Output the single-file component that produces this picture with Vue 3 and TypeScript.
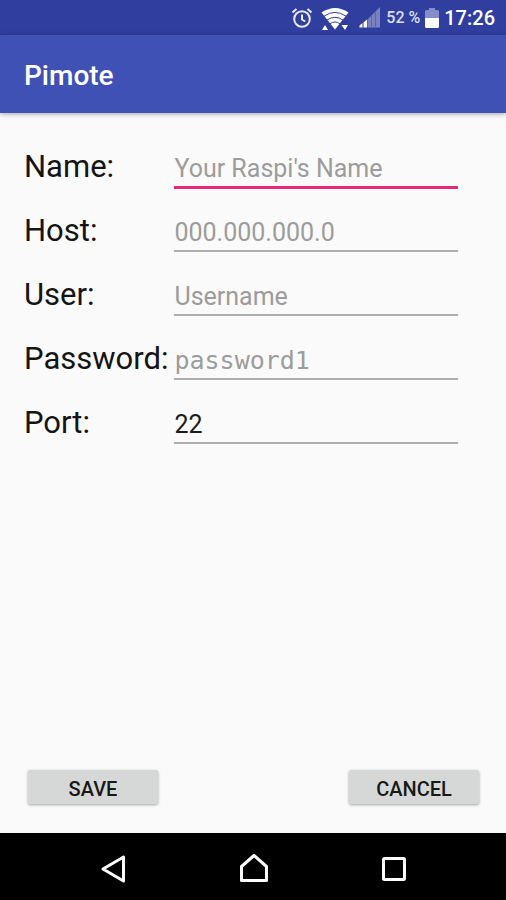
<script setup lang="ts">
import { ref } from 'vue'

interface Field {
  id: string
  label: string
  placeholder: string
  value: string
  mono?: boolean
}

const fields = ref<Field[]>([
  { id: 'name', label: 'Name:', placeholder: "Your Raspi's Name", value: '' },
  { id: 'host', label: 'Host:', placeholder: '000.000.000.0', value: '' },
  { id: 'user', label: 'User:', placeholder: 'Username', value: '' },
  { id: 'password', label: 'Password:', placeholder: 'password1', value: '', mono: true },
  { id: 'port', label: 'Port:', placeholder: '', value: '22' },
])

const active = ref('name')
</script>

<template>
  <div class="screen">
    <div class="status">
      <svg class="alarm" width="22" height="22" viewBox="0 0 22 22" aria-hidden="true">
        <circle cx="11" cy="12" r="7.8" fill="none" stroke="#e8eaf8" stroke-width="2" />
        <path d="M11 7.5v5l3.2 2M1.5 5.5l4-3.6M20.5 5.5l-4-3.6" fill="none" stroke="#e8eaf8" stroke-width="2" />
      </svg>
      <svg class="wifi" width="28" height="24" viewBox="0 0 28 24" aria-hidden="true">
        <path d="M0.5 5.5Q14-3.5 27.5 5.5L14 22.5z" fill="#fff" />
        <path d="M3 9.2Q14 1.6 25 9.2M6 13Q14 7.6 22 13M9 16.8Q14 13.2 19 16.8" fill="none" stroke="#303f9f" stroke-width="1" />
        <path d="M1 23l3-5 3 5zM20.5 18h6.5l-3 5z" fill="#fff" />
      </svg>
      <svg class="signal" width="22" height="21" viewBox="0 0 22 21" aria-hidden="true">
        <path d="M21 0v20.5H8.5V12.5z" fill="#7882c1" />
        <path d="M12.5 8.5v12M16.5 4.5v16" stroke="#5965b2" stroke-width="1" />
        <path d="M0.5 20.5v-2l3-2.5v4.5zM4.5 20.5v-5l3.5-3v8z" fill="#fff" />
      </svg>
      <span class="percent">52 %</span>
      <svg class="battery" width="14" height="20" viewBox="0 0 14 20" aria-hidden="true">
        <path d="M4 0h6v2h2.5q1.5 0 1.5 1.5V10H0V3.5Q0 2 1.5 2H4z" fill="#858ec8" />
        <path d="M0 10h14v8.5q0 1.5-1.5 1.5h-11Q0 20 0 18.5z" fill="#fff" />
      </svg>
      <span class="clock">17:26</span>
    </div>

    <header class="appbar">
      <h1>Pimote</h1>
    </header>

    <form class="content" @submit.prevent>
      <div class="fields">
        <template v-for="field in fields" :key="field.id">
          <label :for="field.id">{{ field.label }}</label>
          <input
            :id="field.id"
            v-model="field.value"
            type="text"
            autocomplete="off"
            :placeholder="field.placeholder"
            :class="{ active: active === field.id, mono: field.mono }"
            @focus="active = field.id"
          />
        </template>
      </div>
      <div class="actions">
        <button type="submit">SAVE</button>
        <button type="button">CANCEL</button>
      </div>
    </form>

    <nav class="navbar">
      <button type="button" aria-label="Back">
        <svg width="28" height="32" viewBox="0 0 28 32" aria-hidden="true">
          <path d="M23.5 4v24L3 16z" />
        </svg>
      </button>
      <button type="button" aria-label="Home">
        <svg width="28" height="32" viewBox="0 0 28 32" aria-hidden="true">
          <path d="M1.5 27.5V13.5L14 2.5l12.5 11v14z" />
        </svg>
      </button>
      <button type="button" aria-label="Recent apps">
        <svg width="28" height="32" viewBox="0 0 28 32" aria-hidden="true">
          <rect x="3.5" y="5.5" width="21" height="21" rx="1" />
        </svg>
      </button>
    </nav>
  </div>
</template>

<style>
body {
  margin: 0;
}
</style>

<style scoped>
.screen {
  display: flex;
  flex-direction: column;
  min-height: 100vh;
  background: #fafafa;
  font-family: Roboto, "Liberation Sans", sans-serif;
  color: #141414;
}

.status {
  display: flex;
  align-items: center;
  justify-content: flex-end;
  height: 35px;
  padding-right: 11px;
  background: #303f9f;
  color: #fff;
}

.wifi {
  margin: 2px 10px 0 8px;
}

.signal {
  margin-right: 5px;
}

.percent {
  margin-right: 5px;
  font-size: 16px;
  font-weight: 500;
  color: #dcdff1;
}

.battery {
  margin-right: 5px;
}

.clock {
  font-size: 20px;
  font-weight: 500;
}

.appbar {
  display: flex;
  align-items: center;
  height: 78px;
  padding: 0 24px;
  background: #3f51b5;
  box-shadow: 0 1px 5px rgba(0, 0, 0, 0.35);
}

h1 {
  margin: 0;
  padding-top: 2px;
  font-size: 28px;
  font-weight: 500;
  color: #fff;
}

.content {
  display: flex;
  flex: 1;
  flex-direction: column;
  justify-content: space-between;
  padding: 35px 27px 29px 24px;
}

.fields {
  display: grid;
  grid-template-columns: auto 1fr;
  grid-auto-rows: 40px;
  gap: 24px 6px;
  padding-right: 21px;
}

label {
  font-size: 31px;
  line-height: 38px;
}

input {
  box-sizing: border-box;
  width: 100%;
  min-width: 0;
  height: 40px;
  margin: 0;
  padding: 2px 0 0;
  border: 0;
  border-bottom: 2px solid #adadad;
  border-radius: 0;
  outline: 0;
  background: none;
  font: 25px Roboto, "Liberation Sans", sans-serif;
  color: #1c1c1c;
}

input.active {
  border-color: #e8277a;
  box-shadow: 0 1px #e8277a;
}

input.mono {
  font-family: "DejaVu Sans Mono", monospace;
}

input::placeholder {
  color: #9c9c9c;
  opacity: 1;
}

.actions {
  display: flex;
  justify-content: space-between;
  padding-left: 4px;
}

.actions button {
  width: 130px;
  height: 34px;
  padding: 4px 0 0;
  border: 0;
  border-radius: 2px;
  background: #d6d8d7;
  box-shadow: 0 1px 3px rgba(0, 0, 0, 0.35);
  font: 500 20px Roboto, "Liberation Sans", sans-serif;
  color: #181818;
}

.navbar {
  display: flex;
  align-items: center;
  justify-content: center;
  gap: 112px;
  height: 67px;
  padding: 4px 0 0 2px;
  box-sizing: border-box;
  background: #000;
}

.navbar button {
  display: flex;
  padding: 0;
  border: 0;
  background: none;
}

.navbar svg {
  fill: none;
  stroke: #fff;
  stroke-width: 3;
  stroke-linejoin: round;
}
</style>
